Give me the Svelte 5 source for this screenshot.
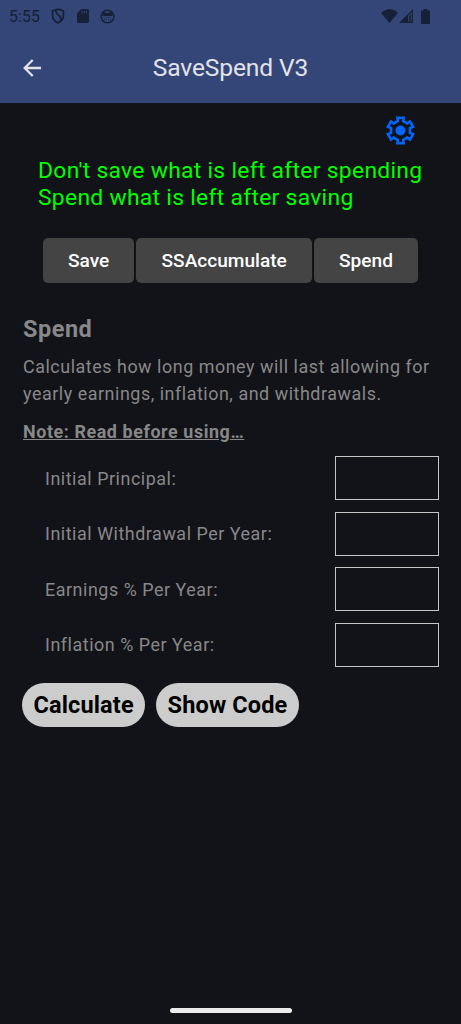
<script lang="ts">
  let principal = $state('')
  let withdrawal = $state('')
  let earnings = $state('')
  let inflation = $state('')

  const tabs = ['Save', 'SSAccumulate', 'Spend']
</script>

<div class="screen">
  <header>
    <div class="status">
      <span class="clock">5:55</span>
      <svg class="shield" viewBox="0 0 14 16" width="14" height="16" fill="none" stroke="currentColor" stroke-width="1.8">
        <path d="M7 1.200 12.400 3v5c0 3.200-2.300 5.500-5.400 6.800C3.900 13.500 1.600 11.200 1.600 8V3z" />
        <path d="M4.800 2.400c-.5 5 6.200 4.700 5.200 10" />
      </svg>
      <svg class="card" viewBox="0 0 12 14" width="12" height="14">
        <path fill="currentColor" d="M4.300 0H10.600Q12 0 12 1.400V12.600Q12 14 10.600 14H1.400Q0 14 0 12.600V4.300z" />
        <path stroke="#334677" stroke-width="1" d="M5 1.600v2.600M7.300 1.600v2.600M9.600 1.600v2.600" />
      </svg>
      <svg class="cat" viewBox="0 0 15 15" width="15" height="15">
        <circle cx="7.500" cy="7.500" r="6.300" fill="none" stroke="currentColor" stroke-width="1.600" />
        <path fill="currentColor" d="M3.200 2.300 5.300 3.700h4.400l2.100-1.400.8 4.700H2.400z" />
        <path stroke="currentColor" stroke-width=".7" stroke-dasharray="1 1" d="M3.500 8.500h8M4 10.300h7" />
      </svg>
      <span class="spacer"></span>
      <svg class="wifi" viewBox="0 0 17 14" width="17" height="14">
        <path fill="currentColor" d="M0 3.800Q8.500-3.600 17 3.800L8.500 14z" />
      </svg>
      <svg class="signal" viewBox="0 0 14 14" width="14" height="14">
        <path fill="currentColor" d="M14 0V14H0z" />
        <path fill="#334677" d="M9 6.600 12.800 2.800V12.800H11.800V5.500L10.200 7.100V12.800H9z" opacity=".85" />
      </svg>
      <svg class="battery" viewBox="0 0 9 15" width="9" height="15">
        <path fill="currentColor" d="M2.600 0H6.400V1.400H8Q9 1.400 9 2.400V14Q9 15 8 15H1Q0 15 0 14V2.400Q0 1.400 1 1.400H2.600z" />
      </svg>
    </div>
    <div class="bar">
      <button type="button" class="back" aria-label="Back">
        <svg viewBox="0 0 18 18" width="18" height="18" fill="none" stroke="currentColor" stroke-width="2.300">
          <path d="M18 9H1.800M9.700 1 1.700 9l8 8" />
        </svg>
      </button>
      <h1>SaveSpend V3</h1>
    </div>
  </header>

  <main>
    <button type="button" class="gear" aria-label="Settings">
      <svg viewBox="-14.500 -14.500 29 29" width="29" height="29">
        <path
          fill="none"
          stroke="currentColor"
          stroke-width="2.600"
          d="M-3.100-12.800H3.100L2.700-9.400 6.800-7.050 9.500-9 12.600-3.700 9.500-2.350V2.350L12.600 3.700 9.500 9 6.800 7.050 2.700 9.400 3.100 12.800H-3.100L-2.700 9.400-6.800 7.050-9.500 9-12.600 3.700-9.500 2.350V-2.350L-12.600-3.700-9.500-9-6.800-7.050-2.700-9.400z"
        />
        <circle r="5" fill="currentColor" />
      </svg>
    </button>

    <p class="motto">Don't save what is left after spending<br />Spend what is left after saving</p>

    <nav>
      {#each tabs as tab (tab)}
        <button type="button">{tab}</button>
      {/each}
    </nav>

    <section>
      <h2>Spend</h2>
      <p class="about">Calculates how long money will last allowing for<br />yearly earnings, inflation, and withdrawals.</p>
      <p class="note">Note: Read before using…</p>

      <div class="fields">
        <label>Initial Principal:<input inputmode="decimal" bind:value={principal} /></label>
        <label>Initial Withdrawal Per Year:<input inputmode="decimal" bind:value={withdrawal} /></label>
        <label>Earnings % Per Year:<input inputmode="decimal" bind:value={earnings} /></label>
        <label>Inflation % Per Year:<input inputmode="decimal" bind:value={inflation} /></label>
      </div>

      <div class="actions">
        <button type="button">Calculate</button>
        <button type="button">Show Code</button>
      </div>
    </section>
  </main>

  <div class="home"></div>
</div>

<style>
  :global(body) { background:#121318; }
  .screen { display:flex; flex-direction:column; box-sizing:border-box; width:461px; height:1024px; background:#121318; color:#888; font-family:Roboto, sans-serif; overflow:hidden; }
  button { padding:0; border:0; background:none; color:inherit; font:inherit; cursor:pointer; }
  svg { display:block; flex:none; }
  h1,h2,p { margin:0; white-space:nowrap; }

  header { flex:none; height:103px; background:#334677; }
  .status { display:flex; align-items:center; height:32px; padding:0 31px 0 9px; color:#162036; }
  .clock { width:42px; font-size:15.7px; letter-spacing:.2px; line-height:32px; padding-top:1px; }
  .card { margin-left:12px; }
  .cat { margin-left:11px; }
  .spacer { flex:1; }
  .signal { margin-left:1px; }
  .battery { margin-left:8px; }
  .bar { display:grid; grid-template-columns:60px 1fr 60px; align-items:center; height:71px; }
  .back { margin-left:23px; color:#e3e2e9; justify-self:start; }
  h1 { color:#e3e2e9; font-size:24.6px; font-weight:400; letter-spacing:-.14px; line-height:32px; text-align:center; }

  main { display:flex; flex-direction:column; flex:1; }
  .gear { align-self:flex-end; margin:13px 46px 0 0; color:#0066ff; }
  .motto { margin:12px 0 0 38px; color:#00ff00; font-size:22.9px; letter-spacing:.28px; line-height:27px; }
  nav { display:flex; justify-content:center; gap:2px; margin-top:27px; }
  nav button { height:45px; padding:0 25.100px; background:#444; border-radius:5px; color:#fff; font-size:19.100px; font-weight:500; }

  section { padding:0 22px 0 23px; margin-top:31px; }
  h2 { font-size:23.500px; font-weight:700; letter-spacing:.5px; line-height:30px; }
  .about { margin-top:9px; font-size:17.9px; letter-spacing:.54px; line-height:27px; }
  .note { margin-top:11px; font-size:17.9px; font-weight:700; letter-spacing:.58px; line-height:27px; text-decoration:underline; }
  .fields { display:flex; flex-direction:column; gap:11.400px; margin-top:11.400px; }
  label { display:flex; align-items:center; justify-content:space-between; padding-left:22px; font-size:17.9px; letter-spacing:.54px; white-space:nowrap; }
  input { box-sizing:border-box; width:104.500px; height:44px; padding:0 8px; border:1px solid #c4c7c5; border-radius:0; background:transparent; color:#ccc; font:inherit; outline:none; }
  .actions { display:flex; gap:11px; margin:16.200px 0 0 -1px; }
  .actions button { height:44.500px; padding:0 11.400px; background:#ccc; border-radius:23px; color:#000; font-size:23.500px; font-weight:700; letter-spacing:.15px; white-space:nowrap; }
  .home { flex:none; align-self:center; width:122px; height:5px; margin-bottom:11px; background:#ececec; border-radius:3px; }
</style>
